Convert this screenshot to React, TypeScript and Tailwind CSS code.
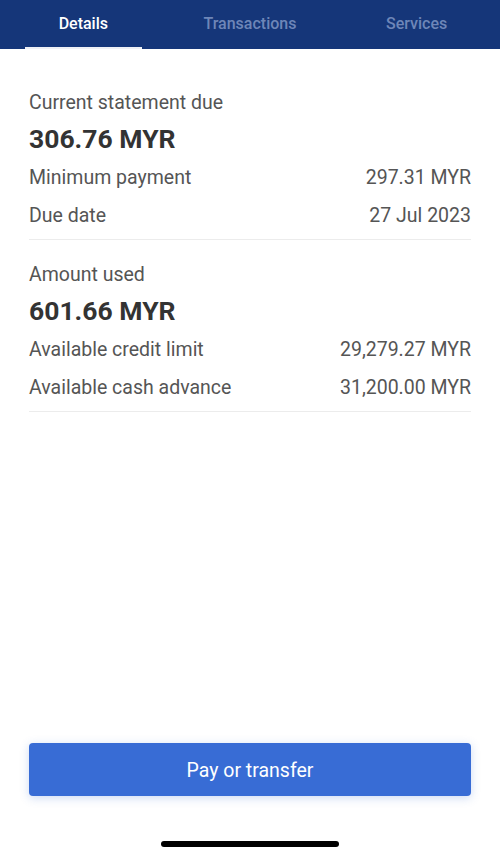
const tabs = ['Details', 'Transactions', 'Services']

type RowProps = {
	label: string
	value: string
}

const Row = ({ label, value }: RowProps) => (
	<div className="flex h-[38px] items-center justify-between text-[19.5px] text-[#555]">
		<span>{label}</span>
		<span>{value}</span>
	</div>
)

type SectionProps = {
	title: string
	amount: string
	rows: RowProps[]
	top: string
}

const Section = ({ title, amount, rows, top }: SectionProps) => (
	<section className={`${top} border-b border-[#ececec] pb-[4px]`}>
		<div className="flex h-[28px] items-center text-[19.5px] text-[#555]">{title}</div>
		<div className="mt-[3px] flex h-[36px] items-center pt-[2px] text-[26.5px] font-bold text-[#333]">
			{amount}
		</div>
		<div className="mt-[3px]">
			{rows.map((r) => (
				<Row key={r.label} {...r} />
			))}
		</div>
	</section>
)

export default function App() {
	return (
		<div
			className="flex h-[857px] w-[500px] flex-col bg-white"
			style={{ fontFamily: 'Roboto, "Noto Sans", sans-serif' }}
		>
			<nav className="grid h-[49px] grid-cols-3 bg-[#153679]">
				{tabs.map((t, i) => (
					<div key={t} className="relative flex items-center justify-center pb-[2px]">
						<span
							className={
								i === 0
									? 'text-[16px] font-medium text-white'
									: 'text-[16px] font-medium text-[#6e86b8]'
							}
						>
							{t}
						</span>
						{i === 0 && (
							<div className="absolute bottom-0 left-[25px] right-[25px] h-[2px] bg-[#eef0f5]" />
						)}
					</div>
				))}
			</nav>

			<div className="px-[29px]">
				<Section
					top="pt-[40px]"
					title="Current statement due"
					amount="306.76 MYR"
					rows={[
						{ label: 'Minimum payment', value: '297.31 MYR' },
						{ label: 'Due date', value: '27 Jul 2023' },
					]}
				/>
				<Section
					top="pt-[21px]"
					title="Amount used"
					amount="601.66 MYR"
					rows={[
						{ label: 'Available credit limit', value: '29,279.27 MYR' },
						{ label: 'Available cash advance', value: '31,200.00 MYR' },
					]}
				/>
			</div>

			<div className="mt-auto px-[29px]">
				<button className="flex h-[53px] w-full items-center justify-center rounded-[4px] bg-[#386cd5] pt-[2px] text-[19.5px] text-white shadow-[0_2px_10px_rgba(56,108,213,0.25)]">
					Pay or transfer
				</button>
			</div>
			<div className="mt-[45px] mb-[10px] flex justify-center">
				<div className="h-[6px] w-[178px] rounded-full bg-black" />
			</div>
		</div>
	)
}
